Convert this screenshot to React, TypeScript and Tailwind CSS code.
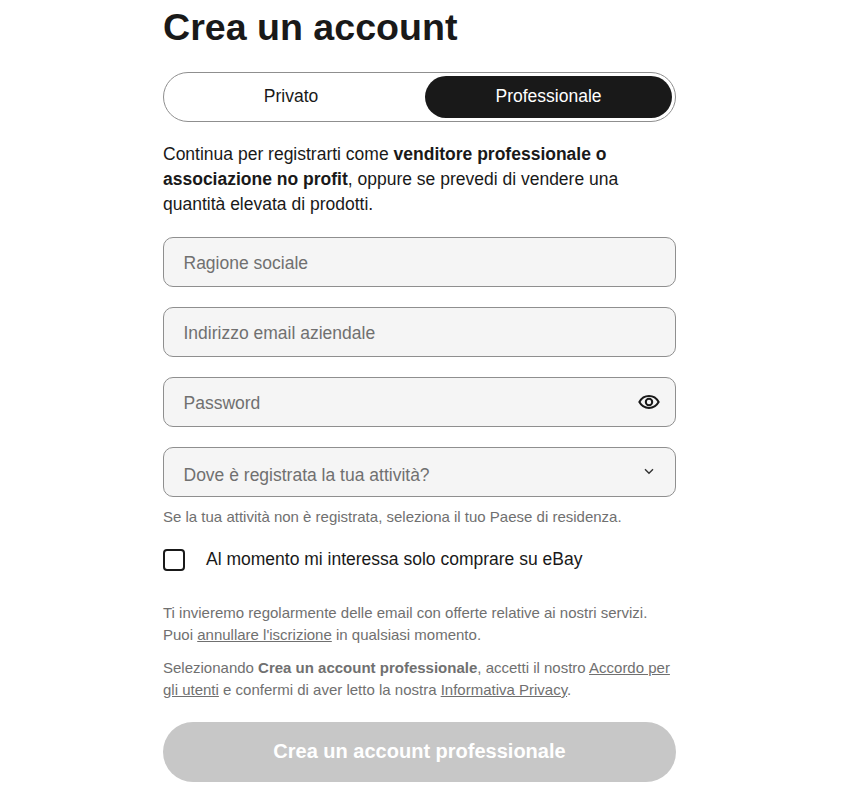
export default function App() {
  const field = "h-[50px] w-full rounded-[10px] border border-[#8f8f8f] bg-[#f5f5f5] pl-[19.5px] pr-[16px] flex items-center justify-between text-[17.5px] text-[#707070]";
  return (
    <div className="h-[798px] w-[868px] overflow-hidden bg-white font-['Liberation_Sans',Arial,sans-serif] text-[#191919]">
      <div className="ml-[163px] w-[513px]">
        <h1 className="h-[72px] pt-[5px] text-[37.6px] leading-[44px] font-bold">Crea un account</h1>
        <div className="flex h-[50px] items-center justify-between rounded-[25px] border border-[#8f8f8f] bg-white pl-[3px] pr-[3px] text-[17.5px]">
          <div className="flex-1 pr-[10px] pb-[2px] text-center">Privato</div>
          <div className="flex h-[42px] w-[247px] items-center justify-center rounded-[21px] bg-[#191919] pb-[2px] text-white">Professionale</div>
        </div>
        <p className="mt-[20px] text-[17.5px] leading-[25px]">
          Continua per registrarti come <b>venditore professionale o<br />associazione no profit</b>, oppure se prevedi di vendere una<br />quantità elevata di prodotti.
        </p>
        <div className="mt-[20px] flex flex-col gap-[20px]">
          <div className={field}><span className="pt-[3px]">Ragione sociale</span></div>
          <div className={field}><span className="pt-[3px]">Indirizzo email aziendale</span></div>
          <div className={field}>
            <span className="pt-[3px]">Password</span>
            <svg width="22" height="22" viewBox="0 0 24 24" fill="none" stroke="#191919" strokeWidth="2.2" className="mr-[-1px]">
              <path d="M1.5 12C4 7.5 7.5 5.5 12 5.5S20 7.5 22.5 12C20 16.5 16.5 18.5 12 18.5S4 16.5 1.5 12Z" />
              <circle cx="12" cy="12" r="3.5" />
            </svg>
          </div>
          <div className={field}>
            <span className="pt-[6px]">Dove è registrata la tua attività?</span>
            <svg width="10" height="7" viewBox="0 0 10 7" fill="none" stroke="#333333" strokeWidth="1.4" className="mr-[5px] mb-[1px]">
              <path d="M1 1.2L5 5.2L9 1.2" />
            </svg>
          </div>
        </div>
        <p className="mt-[10px] text-[15px] leading-[20px] text-[#707070]">Se la tua attività non è registrata, seleziona il tuo Paese di residenza.</p>
        <div className="mt-[19px] flex h-[28px] items-center">
          <div className="h-[22px] w-[22px] rounded-[4px] border-2 border-[#191919] bg-white" />
          <span className="ml-[21px] pb-[2px] text-[17.5px]">Al momento mi interessa solo comprare su eBay</span>
        </div>
        <p className="mt-[28px] text-[15px] leading-[22px] text-[#707070]">
          Ti invieremo regolarmente delle email con offerte relative ai nostri servizi.<br />
          Puoi <span className="underline">annullare l'iscrizione</span> in qualsiasi momento.
        </p>
        <p className="mt-[11px] text-[15px] leading-[22px] text-[#707070]">
          Selezionando <b>Crea un account professionale</b>, accetti il nostro <span className="underline">Accordo per<br />gli utenti</span> e confermi di aver letto la nostra <span className="underline">Informativa Privacy</span>.
        </p>
        <div className="mt-[21px] flex h-[60px] items-center justify-center rounded-[30px] bg-[#c7c7c7] pb-[2px] text-[20px] font-bold text-white">Crea un account professionale</div>
      </div>
    </div>
  );
}
